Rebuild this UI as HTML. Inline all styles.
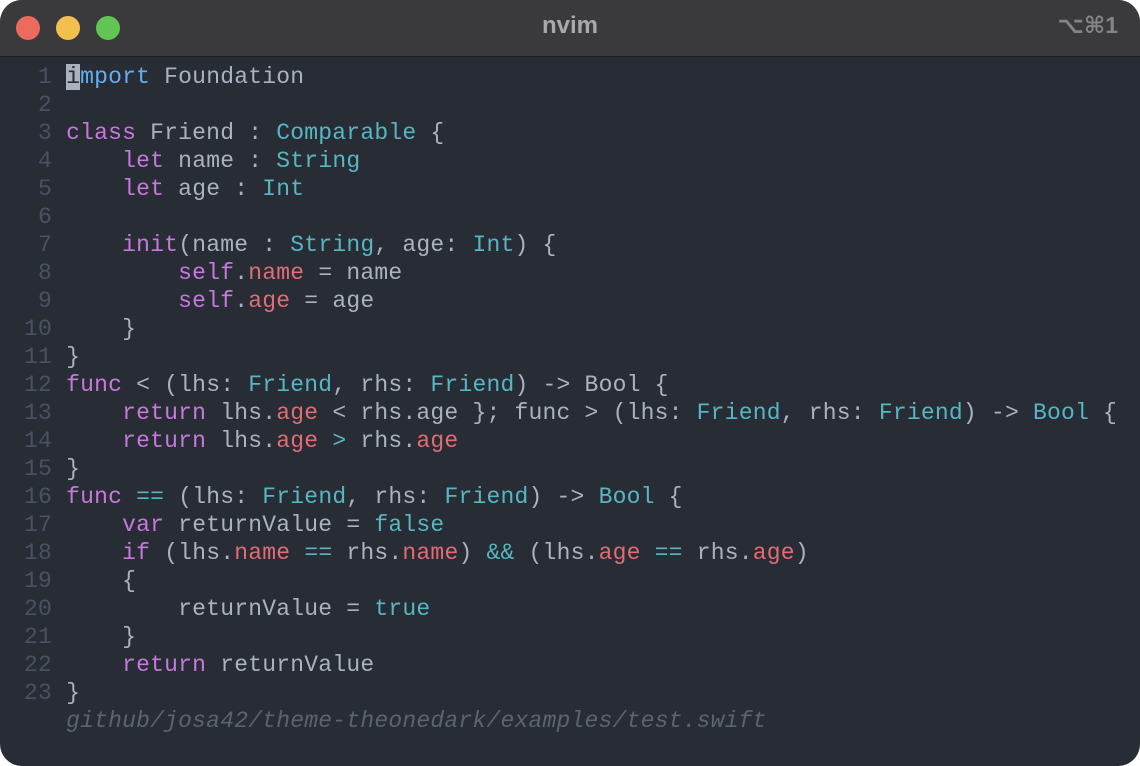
<!DOCTYPE html>
<html><head><style>
html,body{margin:0;padding:0;width:1140px;height:766px;background:#fff;overflow:hidden}
.win{position:absolute;left:0;top:0;width:1140px;height:766px;border-radius:22px;overflow:hidden;background:#282c34}
.tb{position:absolute;left:0;top:0;width:1140px;height:56px;background:#3a393c;border-bottom:1px solid #1e1f22}
.dot{position:absolute;top:16px;width:24px;height:24px;border-radius:50%}
.title{position:absolute;left:0;right:0;top:12px;text-align:center;font:bold 24px "Liberation Sans",sans-serif;color:#a9a9ab}
.sc{position:absolute;right:22px;top:12px;font:bold 23px "Liberation Sans","DejaVu Sans",sans-serif;color:#858488}
.code{position:absolute;left:10px;top:63px;font:23px/28px "Liberation Mono","DejaVu Sans Mono",monospace;letter-spacing:0.21px;color:#abb2bf;white-space:pre}
.n{color:#495162}.k{color:#c678dd}.t{color:#56b6c2}.p{color:#e06c75}.b{color:#61afef}
.c{color:#5c6370;font-style:italic}
.cur{background:#abb2bf;color:#282c34}
</style></head><body>
<div class="win">
<div class="tb">
<div class="dot" style="left:16px;background:#ed6a5e"></div>
<div class="dot" style="left:56px;background:#f5bf4f"></div>
<div class="dot" style="left:96px;background:#61c554"></div>
<div class="title">nvim</div>
<div class="sc">⌥⌘1</div>
</div>
<div class="code"><span class="n">  1 </span><span class="cur">i</span><span class="b">mport</span> Foundation
<span class="n">  2 </span>
<span class="n">  3 </span><span class="k">class</span> Friend : <span class="t">Comparable</span> {
<span class="n">  4 </span>    <span class="k">let</span> name : <span class="t">String</span>
<span class="n">  5 </span>    <span class="k">let</span> age : <span class="t">Int</span>
<span class="n">  6 </span>
<span class="n">  7 </span>    <span class="k">init</span>(name : <span class="t">String</span>, age: <span class="t">Int</span>) {
<span class="n">  8 </span>        <span class="k">self</span>.<span class="p">name</span> = name
<span class="n">  9 </span>        <span class="k">self</span>.<span class="p">age</span> = age
<span class="n"> 10 </span>    }
<span class="n"> 11 </span>}
<span class="n"> 12 </span><span class="k">func</span> &lt; (lhs: <span class="t">Friend</span>, rhs: <span class="t">Friend</span>) -&gt; Bool {
<span class="n"> 13 </span>    <span class="k">return</span> lhs.<span class="p">age</span> &lt; rhs.age }; func &gt; (lhs: <span class="t">Friend</span>, rhs: <span class="t">Friend</span>) -&gt; <span class="t">Bool</span> {
<span class="n"> 14 </span>    <span class="k">return</span> lhs.<span class="p">age</span> <span class="t">&gt;</span> rhs.<span class="p">age</span>
<span class="n"> 15 </span>}
<span class="n"> 16 </span><span class="k">func</span> <span class="t">==</span> (lhs: <span class="t">Friend</span>, rhs: <span class="t">Friend</span>) -&gt; <span class="t">Bool</span> {
<span class="n"> 17 </span>    <span class="k">var</span> returnValue = <span class="t">false</span>
<span class="n"> 18 </span>    <span class="k">if</span> (lhs.<span class="p">name</span> <span class="t">==</span> rhs.<span class="p">name</span>) <span class="t">&amp;&amp;</span> (lhs.<span class="p">age</span> <span class="t">==</span> rhs.<span class="p">age</span>)
<span class="n"> 19 </span>    {
<span class="n"> 20 </span>        returnValue = <span class="t">true</span>
<span class="n"> 21 </span>    }
<span class="n"> 22 </span>    <span class="k">return</span> returnValue
<span class="n"> 23 </span>}
    <span class="c">github/josa42/theme-theonedark/examples/test.swift</span></div>
</div>
</body></html>
